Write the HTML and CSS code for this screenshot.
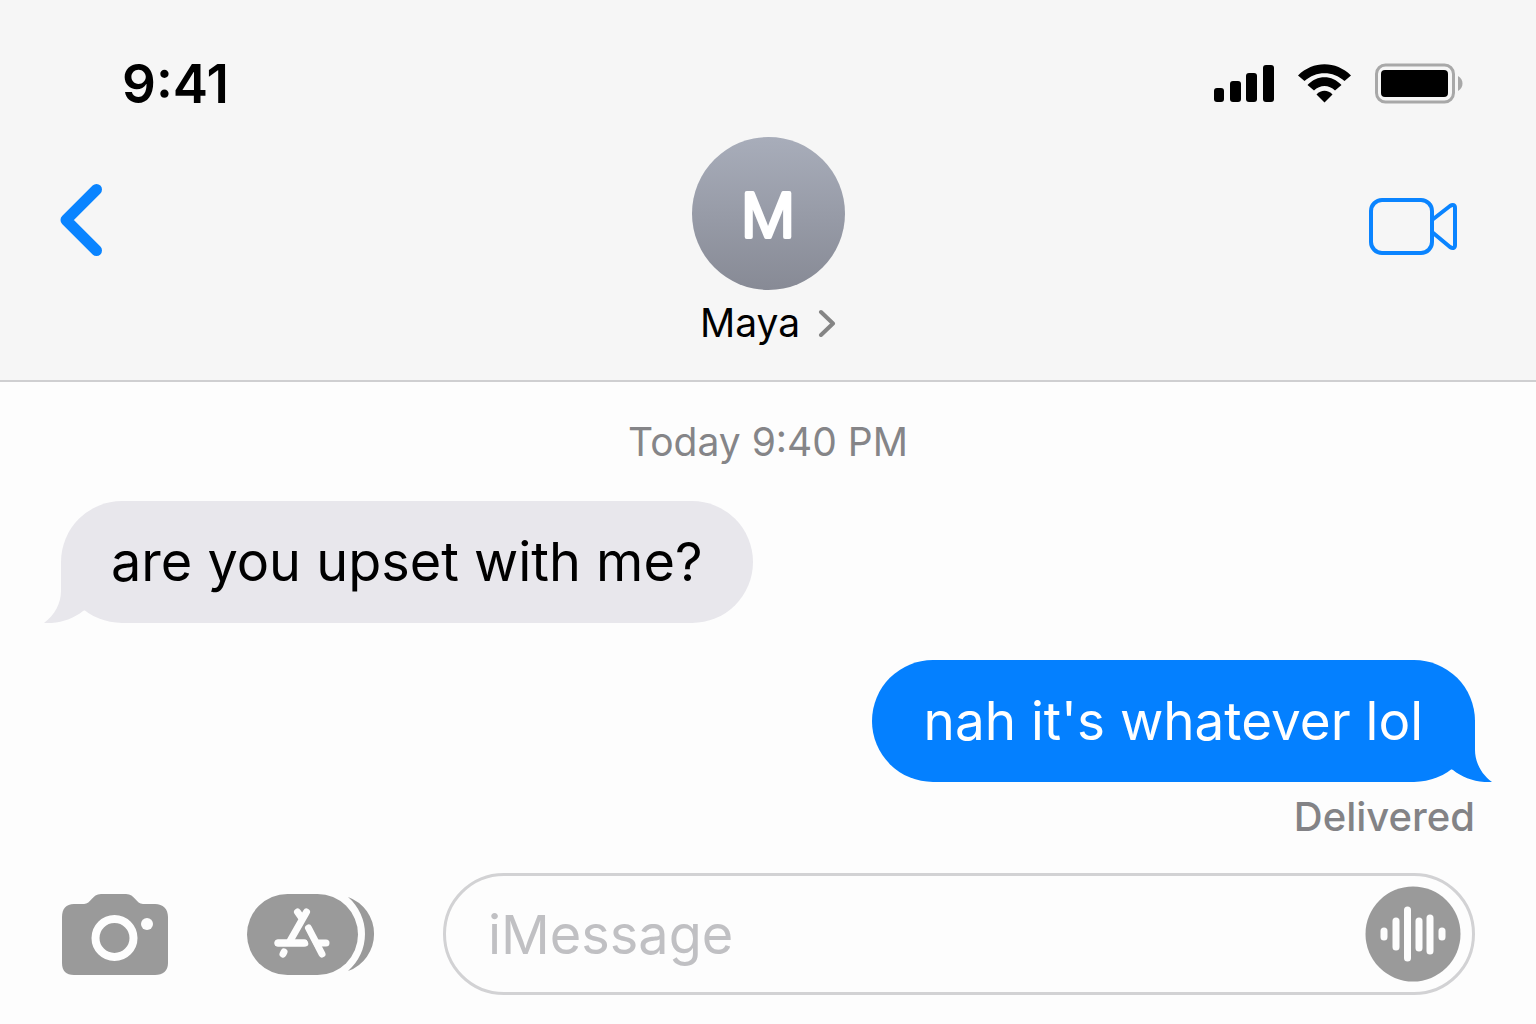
FILE: index.html
```
<!DOCTYPE html>
<html lang="en">
<head>
  <meta charset="UTF-8">
  <meta name="viewport" content="width=device-width, initial-scale=1.0">
  <title>Maya</title>
  <link rel="stylesheet" href="styles.css">
</head>
<body>
  <div class="app">
    <header class="header">
      <div class="status">
        <span class="time">9:41</span>
        <div class="status-icons">
          <svg width="62" height="40" viewBox="0 0 62 40">
            <rect x="0" y="24" width="10" height="14" rx="3"/>
            <rect x="16" y="17" width="11" height="21" rx="3"/>
            <rect x="32" y="9" width="11" height="29" rx="3"/>
            <rect x="49" y="1" width="11" height="37" rx="3"/>
          </svg>
          <svg width="54" height="40" viewBox="0 0 54 40">
            <path d="M0 11.500C15 -3.500 38 -3.500 53 11.500L46.500 17C35 6.500 18 6.500 6.500 17Z"/>
            <path d="M9.500 21C19 10.500 34 10.500 43.500 21L37 26.500C31 20.500 22 20.500 16 26.500Z"/>
            <path d="M18.500 30.500C23 25.500 30 25.500 34.500 30.500L26.500 38.500Z"/>
          </svg>
          <svg width="90" height="42" viewBox="0 0 90 42">
            <rect x="2.500" y="2" width="77" height="37" rx="9" fill="none" stroke="#a8a8a8" stroke-width="3"/>
            <rect x="7" y="7" width="67" height="27" rx="4"/>
            <path d="M84 13C90 16 90 25 84 28Z" fill="#a8a8a8"/>
          </svg>
        </div>
      </div>

      <nav class="nav">
        <button class="nav-button" aria-label="Back">
          <svg width="44" height="96" viewBox="0 0 44 96">
            <path d="M36.500 14.500L6 45L36.500 75.500" fill="none" stroke="#0a84ff" stroke-width="11" stroke-linecap="round" stroke-linejoin="round"/>
          </svg>
        </button>
        <button class="contact">
          <svg class="avatar" width="153" height="153" viewBox="0 0 153 153">
            <defs>
              <linearGradient id="avatar-fill" x1="0" y1="0" x2="0" y2="1">
                <stop offset="0" stop-color="#a8adba"/>
                <stop offset="1" stop-color="#878a95"/>
              </linearGradient>
            </defs>
            <circle cx="76.500" cy="76.500" r="76.500" fill="url(#avatar-fill)"/>
            <text class="initial" x="76" y="100" text-anchor="middle">M</text>
          </svg>
          <span class="name">
            Maya
            <svg width="18" height="28" viewBox="0 0 18 28">
              <path d="M3 3L15 14.500L3 26" fill="none" stroke="#858585" stroke-width="4" stroke-linecap="round" stroke-linejoin="round"/>
            </svg>
          </span>
        </button>
        <button class="nav-button video" aria-label="Video call">
          <svg width="90" height="96" viewBox="0 0 90 96">
            <g fill="none" stroke="#0a84ff" stroke-width="4" stroke-linejoin="round">
              <rect x="3" y="25" width="61" height="53" rx="11"/>
              <path d="M64 45L82 31C85 29 87 30 87 33V70C87 73 85 74 82 72L64 57"/>
            </g>
          </svg>
        </button>
      </nav>
    </header>

    <main class="thread">
      <p class="date">Today 9:40 PM</p>
      <div class="bubble received">
        are you upset with me?
        <svg class="tail" width="60" height="70" viewBox="0 0 60 70">
          <path d="M17 8V38C17 50 11 62 0 70C15 71 29 66 39 58L58 50V8Z"/>
        </svg>
      </div>
      <div class="bubble sent">
        nah it's whatever lol
        <svg class="tail" width="60" height="70" viewBox="0 0 60 70">
          <path d="M17 8V38C17 50 11 62 0 70C15 71 29 66 39 58L58 50V8Z"/>
        </svg>
      </div>
      <p class="receipt">Delivered</p>
    </main>

    <form class="composer">
      <button type="button" class="tool camera" aria-label="Camera">
        <svg width="108" height="84" viewBox="0 0 108 84">
          <path d="M13 12H23C30 12 31 2 40 2H65C74 2 75 12 82 12H94C102 12 107 17 107 25V71C107 79 102 83 94 83H13C5 83 1 79 1 71V25C1 17 5 12 13 12Z" fill="#9a9a9a"/>
          <circle cx="53.500" cy="46" r="19" fill="none" stroke="#fdfdfd" stroke-width="8"/>
          <circle cx="86" cy="32" r="6" fill="#fdfdfd"/>
        </svg>
      </button>
      <button type="button" class="tool apps" aria-label="Apps">
        <svg width="128" height="84" viewBox="0 0 128 84">
          <rect x="0" y="2" width="111" height="81" rx="40.500" fill="#9a9a9a"/>
          <path d="M101 5A39.300 39.300 0 0 1 101 79A48.800 48.800 0 0 0 101 5Z" fill="#9a9a9a"/>
          <g fill="none" stroke="#fdfdfd" stroke-width="7" stroke-linecap="round">
            <path d="M50.500 20L54 25"/>
            <path d="M59.500 20L43 49"/>
            <path d="M61.500 36L75 62"/>
            <path d="M31 51H58"/>
            <path d="M71 51H79"/>
            <path d="M37 60L36 62"/>
          </g>
          <path d="M56.500 39L67 58" stroke="#9a9a9a" stroke-width="3"/>
          <path d="M31 51H57" stroke="#fdfdfd" stroke-width="7" stroke-linecap="round"/>
        </svg>
      </button>
      <div class="field">
        <input type="text" class="message" placeholder="iMessage" aria-label="iMessage">
        <button type="button" class="audio" aria-label="Record audio">
          <svg width="96" height="96" viewBox="0 0 96 96">
            <circle cx="48" cy="48" r="47.500" fill="#9a9a9a"/>
            <g stroke="#fdfdfd" stroke-width="7" stroke-linecap="round">
              <path d="M19 45V51"/>
              <path d="M31 35V61"/>
              <path d="M42.500 24V72"/>
              <path d="M54 35V62"/>
              <path d="M65 32V65"/>
              <path d="M77 45V51"/>
            </g>
          </svg>
        </button>
      </div>
    </form>
  </div>
</body>
</html>
```

FILE: styles.css
```
* {
  box-sizing: border-box;
}
body {
  margin: 0;
  font-family: Inter, "Liberation Sans", sans-serif;
  background: #fdfdfd;
  color: #000;
}
p {
  margin: 0;
}
button {
  padding: 0;
  border: none;
  background: none;
  font-family: inherit;
  color: inherit;
  cursor: pointer;
}
svg {
  display: block;
}
.app {
  display: flex;
  flex-direction: column;
  min-height: 100vh;
}

/* header */
.header {
  background: #f6f6f6;
  border-bottom: 2px solid #cfcfd1;
}
.status {
  display: flex;
  justify-content: space-between;
  align-items: center;
  padding: 53px 72px 0 122px;
  line-height: 62px;
}
.time {
  font-size: 53px;
  font-weight: 600;
}
.status-icons {
  display: flex;
  align-items: center;
  gap: 22px;
}
.nav {
  display: grid;
  grid-template-columns: 1fr auto 1fr;
  align-items: start;
  padding: 22px 60px 33px;
}
.nav-button {
  margin-top: 38px;
  justify-self: start;
}
.video {
  justify-self: end;
  margin-right: 18px;
}
.contact {
  display: flex;
  flex-direction: column;
  align-items: center;
  gap: 9px;
}
.initial {
  fill: #fff;
  stroke: #fff;
  stroke-width: 4px;
  stroke-linejoin: round;
  font-size: 60px;
  font-weight: 300;
}
.name {
  display: flex;
  align-items: center;
  gap: 18px;
  font-size: 39px;
  line-height: 48px;
}

/* messages */
.thread {
  flex: 1;
  display: flex;
  flex-direction: column;
  padding: 36px 61px 34px;
}
.date {
  margin-bottom: 35px;
  text-align: center;
  font-size: 39px;
  line-height: 48px;
  color: #858588;
}
.bubble {
  position: relative;
  padding: 0 50px;
  border-radius: 61px;
  font-size: 54px;
  line-height: 122px;
}
.received {
  align-self: flex-start;
  background: #e8e7ec;
  fill: #e8e7ec;
}
.sent {
  align-self: flex-end;
  margin-top: 37px;
  padding: 0 52px;
  background: #0480ff;
  fill: #0480ff;
  color: #fff;
  font-size: 53px;
}
.tail {
  position: absolute;
  bottom: 0;
  left: -17px;
}
.sent .tail {
  left: auto;
  right: -17px;
  transform: scaleX(-1);
}
.receipt {
  align-self: flex-end;
  margin-top: 13px;
  font-size: 40px;
  font-weight: 500;
  line-height: 44px;
  color: #838386;
}

/* composer */
.composer {
  display: flex;
  align-items: center;
  padding: 0 61px 29px;
}
.camera {
  margin-right: 78px;
}
.apps {
  margin-right: 68px;
}
.field {
  flex: 1;
  display: flex;
  align-items: center;
  height: 122px;
  padding: 0 11px 0 42px;
  border: 3px solid #d2d2d4;
  border-radius: 61px;
}
.message {
  flex: 1;
  min-width: 0;
  padding: 0;
  border: none;
  outline: none;
  background: none;
  font-family: inherit;
  font-size: 54px;
}
.message::placeholder {
  color: #c0c0c3;
}
```
